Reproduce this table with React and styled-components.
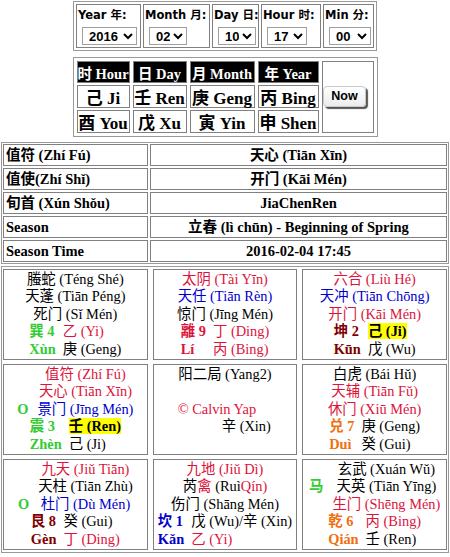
import React from "react";
import styled, { createGlobalStyle } from "styled-components";

const RED = "#dc143c";
const BLUE = "#0000cd";
const GREEN = "#33cc33";
const MAROON = "#800000";
const ORANGE = "#f07010";
const SERIF = `"Liberation Serif", "Noto Sans CJK SC", serif`;

const GlobalStyle = createGlobalStyle`
  body {
    margin: 0;
    background: #ffffff;
    color: #000000;
  }
`;

const pickers = [
  { label: "Year 年:", value: "2016", options: ["2015", "2016", "2017"], w: 65, sw: 55 },
  { label: "Month 月:", value: "02", options: ["01", "02", "03"], w: 67, sw: 38 },
  { label: "Day 日:", value: "10", options: ["09", "10", "11"], w: 47, sw: 38 },
  { label: "Hour 时:", value: "17", options: ["16", "17", "18"], w: 60, sw: 40 },
  { label: "Min 分:", value: "00", options: ["00", "15", "30", "45"], w: 51, sw: 42 },
];

const pillars = [
  ["时 Hour", "日 Day", "月 Month", "年 Year"],
  ["己 Ji", "壬 Ren", "庚 Geng", "丙 Bing"],
  ["酉 You", "戊 Xu", "寅 Yin", "申 Shen"],
];

const info = [
  ["值符 (Zhí Fú)", "天心 (Tiān Xīn)"],
  ["值使(Zhí Shǐ)", "开门 (Kāi Mén)"],
  ["旬首 (Xún Shǒu)", "JiaChenRen"],
  ["Season", "立春 (lì chūn) - Beginning of Spring"],
  ["Season Time", "2016-02-04 17:45"],
];

const t = (text, color = "#000", opts = {}) => ({ text, color, ...opts });

const palaces = [
  {
    top: [
      { parts: [t("螣蛇 (Téng Shé)")] },
      { parts: [t("天蓬 (Tiān Péng)")] },
      { parts: [t("死门 (Sǐ Mén)")] },
    ],
    bottom: [
      [t("巽 4", GREEN), [t("乙 (Yi)", RED)]],
      [t("Xùn", GREEN), [t("庚 (Geng)")]],
    ],
  },
  {
    top: [
      { parts: [t("太阴 (Tài Yīn)", RED)] },
      { parts: [t("天任 (Tiān Rèn)", BLUE)] },
      { parts: [t("惊门 (Jīng Mén)")] },
    ],
    bottom: [
      [t("離 9", RED), [t("丁 (Ding)", RED)]],
      [t("Lí", RED), [t("丙 (Bing)", RED)]],
    ],
  },
  {
    top: [
      { parts: [t("六合 (Liù Hé)", RED)] },
      { parts: [t("天冲 (Tiān Chōng)", BLUE)] },
      { parts: [t("开门 (Kāi Mén)", RED)] },
    ],
    bottom: [
      [t("坤 2", MAROON), [t("己 (Ji)", "#000", { bold: true, hl: true })]],
      [t("Kūn", MAROON), [t("戊 (Wu)")]],
    ],
  },
  {
    top: [
      { parts: [t("值符 (Zhí Fú)", RED)] },
      { parts: [t("天心 (Tiān Xīn)", RED)] },
      { marker: "O", parts: [t("景门 (Jīng Mén)", BLUE)] },
    ],
    bottom: [
      [t("震 3", GREEN), [t("壬 (Ren)", "#000", { bold: true, hl: true })]],
      [t("Zhèn", GREEN), [t("己 (Ji)")]],
    ],
  },
  { center: true },
  {
    top: [
      { parts: [t("白虎 (Bái Hǔ)")] },
      { parts: [t("天辅 (Tiān Fǔ)", RED)] },
      { parts: [t("休门 (Xiū Mén)", RED)] },
    ],
    bottom: [
      [t("兑 7", ORANGE), [t("庚 (Geng)")]],
      [t("Duì", ORANGE), [t("癸 (Gui)")]],
    ],
  },
  {
    top: [
      { parts: [t("九天 (Jiǔ Tiān)", RED)] },
      { parts: [t("天柱 (Tiān Zhù)")] },
      { marker: "O", parts: [t("杜门 (Dù Mén)", BLUE)] },
    ],
    bottom: [
      [t("艮 8", MAROON), [t("癸 (Gui)")]],
      [t("Gèn", MAROON), [t("丁 (Ding)", RED)]],
    ],
  },
  {
    top: [
      { parts: [t("九地 (Jiǔ Dì)", RED)] },
      { parts: [t("芮"), t("禽", RED), t(" (Ruì"), t("Qín)", RED)] },
      { parts: [t("伤门 (Shāng Mén)")] },
    ],
    bottom: [
      [t("坎 1", BLUE), [t("戊 (Wu)/辛 (Xin)")]],
      [t("Kǎn", BLUE), [t("乙 (Yi)", RED)]],
    ],
  },
  {
    top: [
      { parts: [t("玄武 (Xuán Wǔ)")] },
      { marker: "马", parts: [t("天英 (Tiān Yīng)")] },
      { parts: [t("生门 (Shēng Mén)", RED)] },
    ],
    bottom: [
      [t("乾 6", ORANGE), [t("丙 (Bing)", RED)]],
      [t("Qián", ORANGE), [t("壬 (Ren)")]],
    ],
  },
];

const Page = styled.div`
  display: flex;
  flex-direction: column;
  align-items: center;
  padding-top: 1px;
`;

const PickerBar = styled.div`
  display: flex;
  gap: 2px;
  padding: 2px;
  border: 1px solid #999999;
`;

const PickerCell = styled.div`
  width: ${(p) => p.$w}px;
  box-sizing: border-box;
  border: 1px solid #808080;
  padding: 2px 1px;
`;

const PickerLabel = styled.div`
  font-family: "DejaVu Sans", "Noto Sans CJK SC", sans-serif;
  font-weight: bold;
  font-size: 11.5px;
  line-height: 17px;
  white-space: nowrap;
`;

const Picker = styled.select`
  display: block;
  width: ${(p) => p.$w}px;
  height: 18px;
  margin: 3px 0 0 4px;
  padding: 0 0 0 2px;
  font-family: "Liberation Sans", sans-serif;
  font-weight: bold;
  font-size: 13px;
  color: #000000;
  background: #ffffff;
  border: 1px solid #a0a0a0;
`;

const PillarGrid = styled.div`
  display: grid;
  grid-template-columns: 53px 54px 65px 61px 52px;
  grid-template-rows: 22px 23px 23px;
  column-gap: 3px;
  row-gap: 2px;
  padding: 3px;
  margin-top: 6px;
  border: 1px solid #999999;
`;

const PillarCell = styled.div`
  display: flex;
  align-items: center;
  justify-content: center;
  border: 1px solid #808080;
  background: ${(p) => (p.$head ? "#000000" : "#ffffff")};
  color: ${(p) => (p.$head ? "#ffffff" : "#000000")};
  font-family: ${SERIF};
  font-weight: bold;
  font-size: ${(p) => (p.$head ? 14.5 : 17)}px;
  white-space: nowrap;
`;

const NowCell = styled.div`
  grid-column: 5;
  grid-row: 1 / span 3;
  display: flex;
  align-items: center;
  justify-content: center;
  border: 1px solid #808080;
`;

const NowButton = styled.button`
  width: 43px;
  height: 21px;
  margin: -2px 0 0 -6px;
  padding: 0;
  border: 1px solid #c8c8c8;
  border-radius: 4px;
  background: linear-gradient(#ffffff, #ececec);
  box-shadow: 2px 2px 1px #555555;
  font-family: "Liberation Sans", sans-serif;
  font-weight: bold;
  font-size: 12.5px;
  color: #000000;
`;

const InfoTable = styled.div`
  align-self: stretch;
  margin: 5px 1px 0;
  display: grid;
  grid-template-columns: 145px 1fr;
  gap: 2px;
  padding: 1px;
  border: 1px solid #999999;
`;

const InfoCell = styled.div`
  height: 22px;
  box-sizing: border-box;
  border: 1px solid #808080;
  padding: 0 2px;
  font-family: ${SERIF};
  font-weight: bold;
  font-size: 14.5px;
  line-height: 20px;
  text-align: ${(p) => (p.$center ? "center" : "left")};
  white-space: nowrap;
`;

const PalaceGrid = styled.div`
  align-self: stretch;
  margin: 2px 1px 0;
  display: grid;
  grid-template-columns: repeat(3, 1fr);
  column-gap: 5px;
  row-gap: 4px;
  padding: 2px 1px;
  border: 1px solid #999999;
`;

const Palace = styled.div`
  height: 91px;
  box-sizing: border-box;
  border: 1px solid #808080;
  display: flex;
  flex-direction: column;
  justify-content: center;
  font-family: ${SERIF};
  font-size: 14.4px;
  line-height: 17.5px;
`;

const InnerTable = styled.table`
  border-collapse: collapse;
  margin: 0 auto;
  td {
    padding: 0;
    white-space: nowrap;
  }
`;

const MarkerTd = styled.td`
  padding-right: 9px !important;
  color: ${GREEN};
  font-weight: bold;
`;

const TextTd = styled.td`
  text-align: center;
`;

const LabelTd = styled.td`
  padding-right: 7px !important;
  color: ${(p) => p.$color};
  font-weight: bold;
`;

const Part = styled.span`
  color: ${(p) => p.$color};
  font-weight: ${(p) => (p.$bold ? "bold" : "normal")};
  background: ${(p) => (p.$hl ? "#ffff00" : "transparent")};
`;

const Line = styled.div`
  padding-left: ${(p) => p.$indent || 0}px;
  text-align: ${(p) => (p.$center ? "center" : "left")};
  color: ${(p) => p.$color || "#000000"};
  white-space: nowrap;
`;

const Parts = ({ parts }) =>
  parts.map((p, i) => (
    <Part key={i} $color={p.color} $bold={p.bold} $hl={p.hl}>
      {p.text}
    </Part>
  ));

const PalaceBox = ({ palace }) => {
  if (palace.center) {
    return (
      <Palace>
        <Line $center>阳二局 (Yang2)</Line>
        <Line>&nbsp;</Line>
        <Line $indent={24} $color={RED}>
          © Calvin Yap
        </Line>
        <Line $indent={68}>辛 (Xin)</Line>
        <Line>&nbsp;</Line>
      </Palace>
    );
  }
  const hasMarker = palace.top.some((row) => row.marker);
  return (
    <Palace>
      <InnerTable>
        <tbody>
          {palace.top.map((row, i) => (
            <tr key={i}>
              {hasMarker && <MarkerTd>{row.marker || ""}</MarkerTd>}
              <TextTd>
                <Parts parts={row.parts} />
              </TextTd>
            </tr>
          ))}
        </tbody>
      </InnerTable>
      <InnerTable>
        <tbody>
          {palace.bottom.map(([label, stem], i) => (
            <tr key={i}>
              <LabelTd $color={label.color}>{label.text}</LabelTd>
              <td>
                <Parts parts={stem} />
              </td>
            </tr>
          ))}
        </tbody>
      </InnerTable>
    </Palace>
  );
};

const App = () => {
  return (
    <Page>
      <GlobalStyle />
      <PickerBar>
        {pickers.map((p) => (
          <PickerCell key={p.label} $w={p.w}>
            <PickerLabel>{p.label}</PickerLabel>
            <Picker $w={p.sw} defaultValue={p.value}>
              {p.options.map((o) => (
                <option key={o}>{o}</option>
              ))}
            </Picker>
          </PickerCell>
        ))}
      </PickerBar>

      <PillarGrid>
        {pillars.map((row, r) =>
          row.map((text) => (
            <PillarCell key={text} $head={r === 0}>
              {text}
            </PillarCell>
          ))
        )}
        <NowCell>
          <NowButton>Now</NowButton>
        </NowCell>
      </PillarGrid>

      <InfoTable>
        {info.map(([k, v]) => (
          <React.Fragment key={k}>
            <InfoCell>{k}</InfoCell>
            <InfoCell $center>{v}</InfoCell>
          </React.Fragment>
        ))}
      </InfoTable>

      <PalaceGrid>
        {palaces.map((p, i) => (
          <PalaceBox key={i} palace={p} />
        ))}
      </PalaceGrid>
    </Page>
  );
};

export default App;
